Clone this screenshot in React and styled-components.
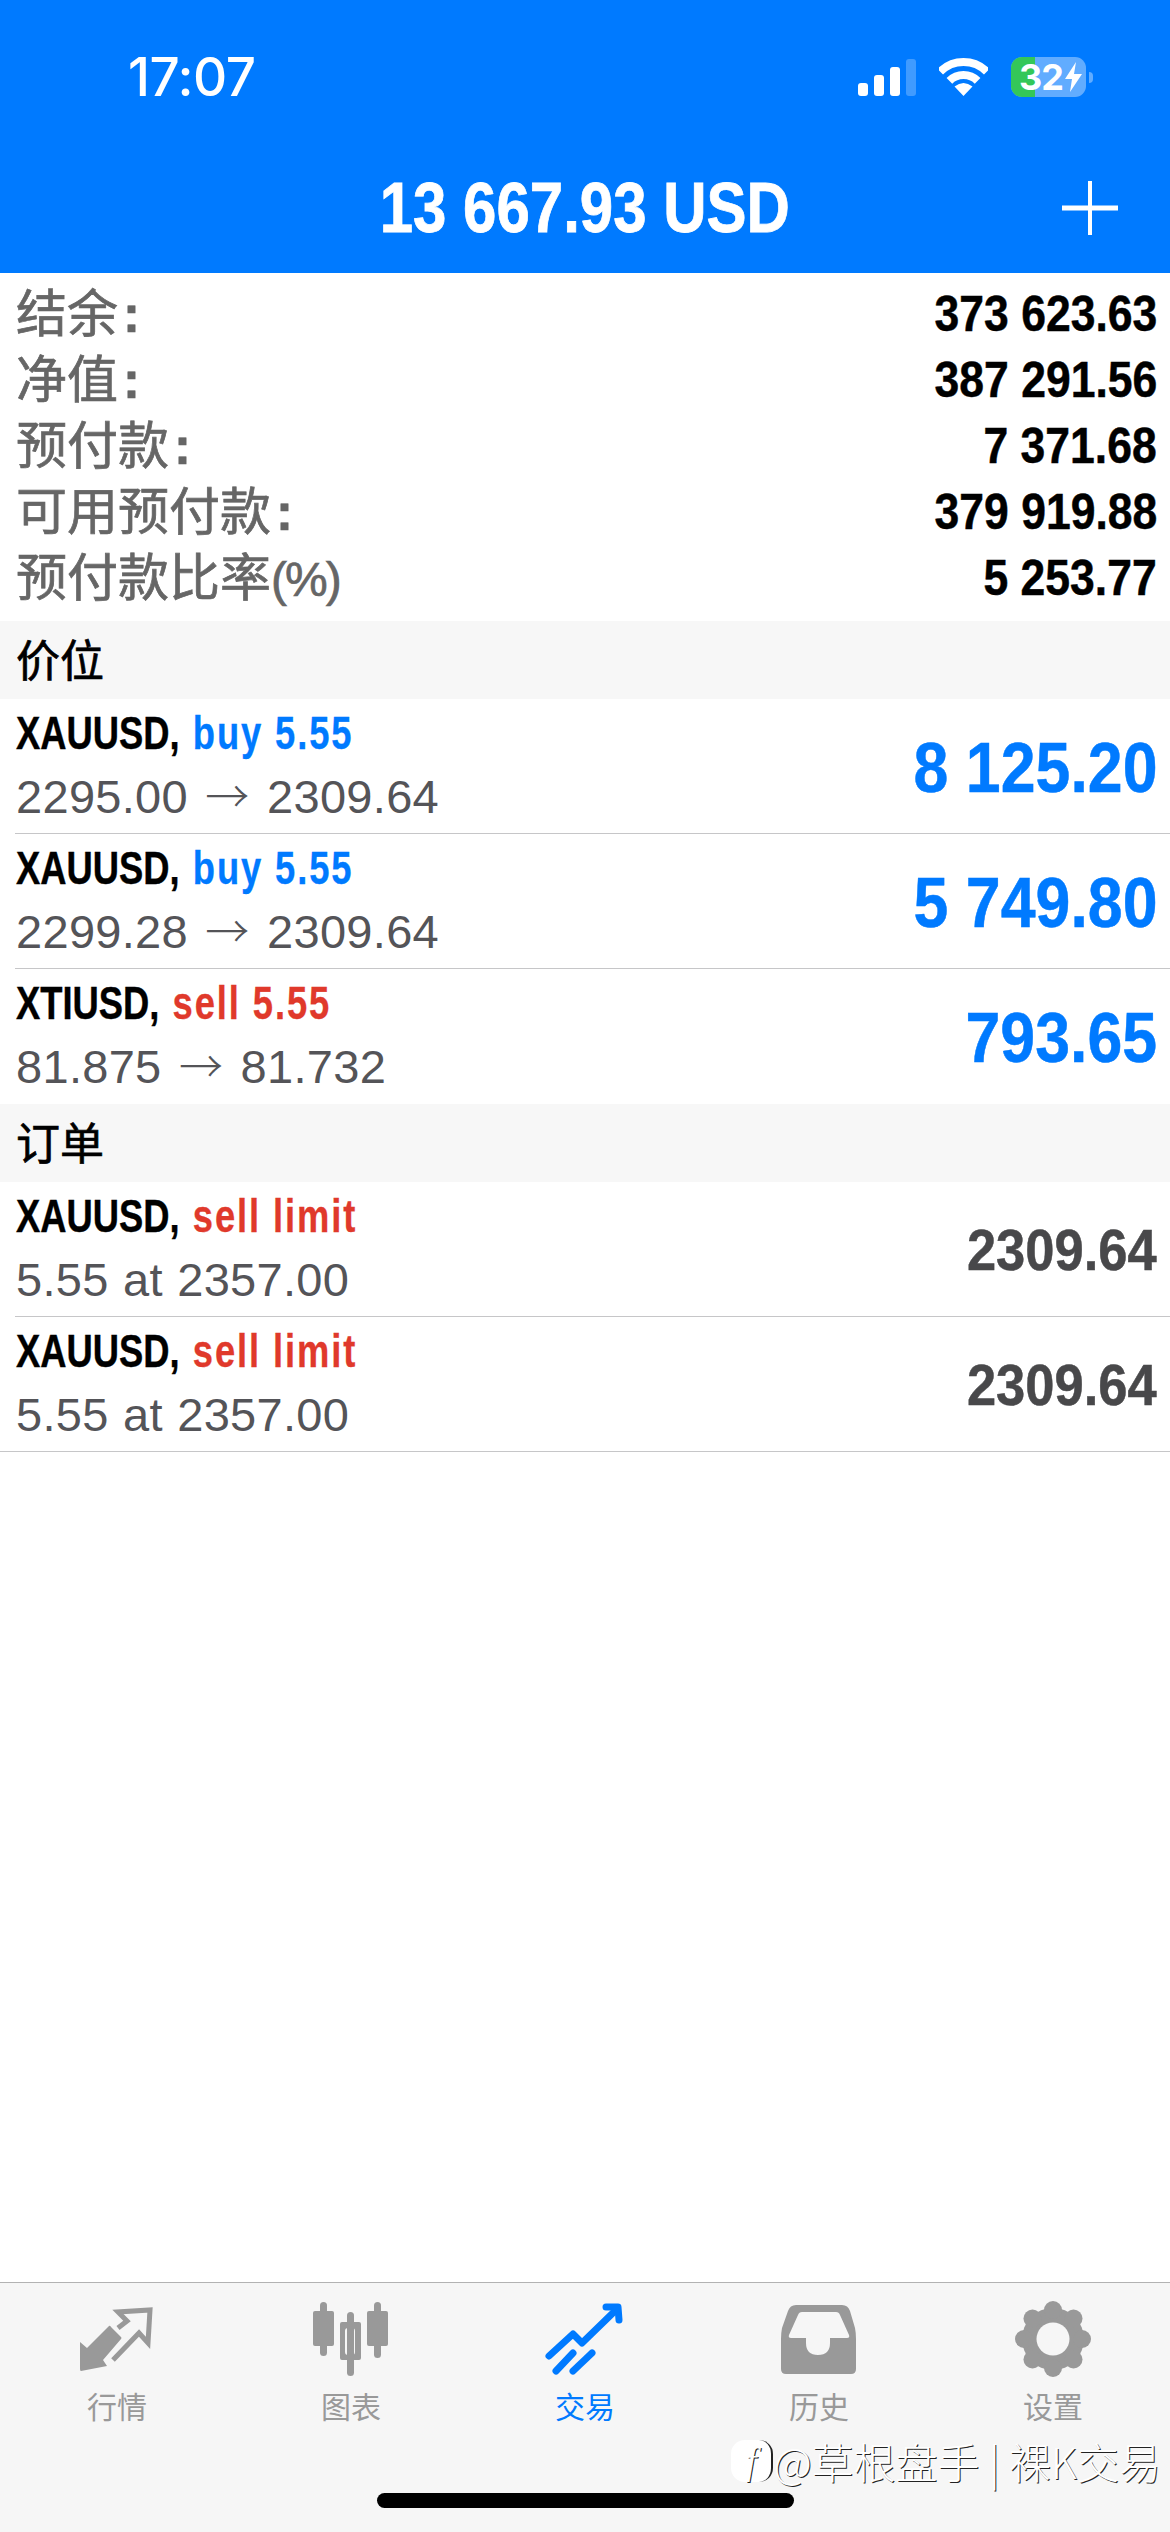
import React from 'react';
import styled, { createGlobalStyle } from 'styled-components';

const BLUE = '#007aff';
const RED = '#e0392b';
const TAB_GRAY = '#999999';
const FONT = `"Liberation Sans", "Noto Sans CJK SC", sans-serif`;

const GlobalStyle = createGlobalStyle`
    html, body {
        margin:0;
        padding:0;
        background:#fff;
    }
`

const Page = styled.div`
    position:relative;
    display:flex;
    flex-direction:column;
    width:1170px;
    height:2532px;
    overflow:hidden;
    background:#fff;
    font-family:${FONT};
`

const Narrow = styled.span`
    display:inline-block;
    white-space:pre;
    transform:scaleX(${props => props.$x});
    transform-origin:${props => props.$origin || 'left'} center;
`

const Header = styled.header`
    height:273px;
    background:${BLUE};
    color:#fff;
    flex-shrink:0;
`

const StatusBar = styled.div`
    display:flex;
    justify-content:space-between;
    align-items:center;
    height:154px;
    padding:0 77px 0 128px;
`

const Clock = styled.div`
    font-family:Inter, sans-serif;
    font-size:53px;
    font-weight:500;
    letter-spacing:-0.5px;
`

const StatusIcons = styled.div`
    display:flex;
    align-items:center;
    gap:23px;
`

const SignalBars = styled.div`
    display:flex;
    align-items:flex-end;
    gap:6px;
    height:37px;
`

const SignalBar = styled.div`
    width:10px;
    height:${props => props.$h}px;
    border-radius:3px;
    background:${props => props.$off ? 'rgba(255,255,255,0.25)' : '#fff'};
`

const Battery = styled.div`
    position:relative;
    display:flex;
    align-items:center;
    width:75px;
    height:40px;
    margin-right:7px;
    border-radius:11px;
    background:rgba(255,255,255,0.38);

    &::after {
        content:'';
        position:absolute;
        right:-7px;
        top:15px;
        width:4px;
        height:11px;
        border-radius:0 4px 4px 0;
        background:rgba(255,255,255,0.38);
    }
`

const BatteryFill = styled.div`
    position:absolute;
    left:0;
    top:0;
    bottom:0;
    width:24px;
    border-radius:11px 0 0 11px;
    background:#34c759;
`

const BatteryText = styled.span`
    position:relative;
    padding-left:8px;
    font-family:Inter, sans-serif;
    font-size:36px;
    font-weight:700;
    line-height:40px;
    letter-spacing:-1px;
`

const BatteryBolt = styled.svg`
    position:relative;
    margin-left:2px;
`

const NavBar = styled.div`
    display:grid;
    grid-template-columns:1fr auto 1fr;
    align-items:center;
    height:108px;
`

const Balance = styled(Narrow)`
    font-size:71px;
    font-weight:700;
    line-height:108px;
    -webkit-text-stroke:0.8px #fff;
`

const PlusBtn = styled.svg`
    justify-self:end;
    margin-right:52px;
`

const Summary = styled.section`
    padding:8px 13px 10px 16px;
`

const SummaryRow = styled.div`
    display:flex;
    justify-content:space-between;
    align-items:center;
    height:66px;
`

const SummaryLabel = styled.span`
    padding-bottom:8px;
    font-size:51px;
    color:#666;
    -webkit-text-stroke:0.7px #666;
`

const LabelColon = styled.span`
    margin-left:5px;
    font-weight:700;
`

const LabelUnit = styled.span`
    font-size:48px;
    letter-spacing:-2px;
`

const SummaryValue = styled(Narrow)`
    font-size:50px;
    font-weight:700;
    color:#000;
    -webkit-text-stroke:0.5px #000;
`

const SectionBand = styled.div`
    display:flex;
    align-items:center;
    box-sizing:border-box;
    height:78px;
    padding:0 0 5px 16px;
    background:#f7f7f7;
    font-size:44px;
    color:#000;
    -webkit-text-stroke:0.7px #000;
`

const TradeRow = styled.div`
    display:flex;
    justify-content:space-between;
    align-items:center;
    box-sizing:border-box;
    height:135px;
    margin-left:${props => props.$sep === 'inset' ? '15px' : '0'};
    padding:0 13px 0 ${props => props.$sep === 'inset' ? '1px' : '16px'};
    border-bottom:1px solid ${props => props.$sep === 'none' ? 'transparent' : '#c6c6c8'};
`

const TradeInfo = styled.div`
    display:flex;
    flex-direction:column;
    padding-bottom:2px;
`

const TradeTitle = styled(Narrow)`
    font-size:46px;
    font-weight:700;
    line-height:63px;
    color:#000;
    -webkit-text-stroke:0.4px #000;
`

const TradeSide = styled.span`
    margin-left:4px;
    letter-spacing:2.4px;
    color:${props => props.$buy ? BLUE : RED};
    -webkit-text-stroke:0.3px ${props => props.$buy ? BLUE : RED};
`

const TradeDetail = styled.div`
    font-size:47px;
    line-height:63px;
    letter-spacing:0.3px;
    word-spacing:1px;
    color:#545458;
    white-space:pre;
`

const DetailArrow = styled.span`
    display:inline-block;
    margin:0 3px;
    font-family:"Noto Sans CJK SC", sans-serif;
    font-size:44px;
    font-weight:300;
    line-height:40px;
`

const TradeAmount = styled(Narrow)`
    padding-top:${props => props.$order ? 0 : 4}px;
    font-size:${props => props.$order ? 58 : 70}px;
    font-weight:700;
    color:${props => props.$order ? '#48484a' : BLUE};
    -webkit-text-stroke:0.5px ${props => props.$order ? '#48484a' : BLUE};
`

const Spacer = styled.div`
    flex:1;
`

const TabBar = styled.nav`
    display:grid;
    grid-template-columns:repeat(5, 1fr);
    box-sizing:border-box;
    height:250px;
    padding-top:12px;
    border-top:1px solid #b2b2b2;
    background:#f6f6f6;
`

const Tab = styled.div`
    display:flex;
    flex-direction:column;
    align-items:center;
    color:${props => props.$active ? BLUE : TAB_GRAY};
`

const TabLabel = styled.span`
    font-size:30px;
    line-height:46px;
`

const HomeIndicator = styled.div`
    position:absolute;
    left:377px;
    bottom:24px;
    width:417px;
    height:15px;
    border-radius:8px;
    background:#000;
`

const Watermark = styled.div`
    position:absolute;
    right:9px;
    bottom:47px;
    display:flex;
    align-items:center;
    font-family:"Noto Sans CJK SC", sans-serif;
    font-size:42px;
    font-weight:300;
    line-height:48px;
    color:#fff;
    text-shadow:1px 1px 0 #222;
    white-space:pre;
`

const WatermarkLogo = styled.div`
    display:flex;
    justify-content:center;
    align-items:center;
    width:42px;
    height:42px;
    border-radius:14px;
    background:#fff;
    border-right:2px solid #222;
    box-sizing:border-box;
    font-family:"Liberation Serif", serif;
    font-style:italic;
    font-size:38px;
    color:#fff;
`

const IconSvg = ({ children }) => (
    <svg width="100" height="90" viewBox="0 0 100 90" fill="currentColor">{children}</svg>
);

const QuotesIcon = () => (
    <IconSvg>
        <g transform="translate(3 0)">
            <path d="M39 31 Q40 30 41 32 L51 42 Q52 43 51 44 L33 65 L37 71 L11 76 Q10 76 10 74 V47 L17 53 Z" />
            <path d="M48 33 L57 26 L48 17 L80 15 L78 48 L69 38 L43 65" fill="none" stroke="currentColor" strokeWidth="5" />
        </g>
    </IconSvg>
);

const ChartIcon = () => (
    <IconSvg>
        <g transform="translate(-1 0)">
            <rect x="20" y="7" width="7" height="54" rx="3.5" />
            <rect x="13" y="16" width="21" height="35" rx="2" />
            <rect x="74" y="7" width="7" height="56" rx="3.5" />
            <rect x="67" y="16" width="21" height="35" rx="2" />
            <rect x="47" y="17" width="7" height="64" rx="3.5" />
            <path fillRule="evenodd" d="M42 27 H59 Q61 27 61 29 V63 Q61 65 59 65 H42 Q40 65 40 63 V29 Q40 27 42 27 Z M48 33 Q45 33 45 36 V57 Q45 60 48 60 H52 Q55 60 55 57 V36 Q55 33 52 33 Z" />
        </g>
    </IconSvg>
);

const TradeIcon = () => (
    <IconSvg>
        <g fill="none" stroke="currentColor" strokeWidth="7" strokeLinecap="round" strokeLinejoin="round">
            <path d="M14 61 L38 39 L47 48 L82 14" />
            <path d="M71 12 H83 L84 25" />
            <path d="M21 76 L38 58" />
            <path d="M38 76 L57 58" />
        </g>
    </IconSvg>
);

const HistoryIcon = () => (
    <IconSvg>
        <g transform="translate(1 0)">
            <path fillRule="evenodd" d="M26 10 H72 Q78 10 80 16 L85 33 Q86 38 86 44 V74 Q86 79 81 79 H16 Q11 79 11 74 V44 Q11 38 12 33 L18 16 Q20 10 26 10 Z M32 17 Q29 17 28 20 L19 40 Q18 43 21 43 H36 V48 Q36 60 48 60 Q60 60 60 48 V43 H77 Q80 43 79 40 L70 20 Q69 17 66 17 Z" />
        </g>
    </IconSvg>
);

const gearLobes = [0, 45, 90, 135, 180, 225, 270, 315];

const SettingsIcon = () => (
    <IconSvg>
        <circle cx="50" cy="44" r="31" />
        {gearLobes.map(deg => (
            <circle
                key={deg}
                cx={50 + 29 * Math.cos(deg * Math.PI / 180)}
                cy={44 + 29 * Math.sin(deg * Math.PI / 180)}
                r="9"
            />
        ))}
        <circle cx="50" cy="44" r="16.5" fill="#f6f6f6" />
    </IconSvg>
);

const summary = [
    ['结余', '373 623.63'],
    ['净值', '387 291.56'],
    ['预付款', '7 371.68'],
    ['可用预付款', '379 919.88'],
    ['预付款比率', '5 253.77', '(%)'],
];

const positions = [
    { symbol: 'XAUUSD,', side: 'buy 5.55', buy: true, from: '2295.00', to: '2309.64', amount: '8 125.20', sep: 'inset' },
    { symbol: 'XAUUSD,', side: 'buy 5.55', buy: true, from: '2299.28', to: '2309.64', amount: '5 749.80', sep: 'inset' },
    { symbol: 'XTIUSD,', side: 'sell 5.55', buy: false, from: '81.875', to: '81.732', amount: '793.65', sep: 'none' },
];

const orders = [
    { symbol: 'XAUUSD,', side: 'sell limit', buy: false, detail: '5.55 at 2357.00', amount: '2309.64', sep: 'inset' },
    { symbol: 'XAUUSD,', side: 'sell limit', buy: false, detail: '5.55 at 2357.00', amount: '2309.64', sep: 'full' },
];

const tabs = [
    { label: '行情', Icon: QuotesIcon },
    { label: '图表', Icon: ChartIcon },
    { label: '交易', Icon: TradeIcon, active: true },
    { label: '历史', Icon: HistoryIcon },
    { label: '设置', Icon: SettingsIcon },
];

function Trade({ item, order }) {
    return (
        <TradeRow $sep={item.sep}>
            <TradeInfo>
                <TradeTitle $x={0.79}>
                    {item.symbol} <TradeSide $buy={item.buy}>{item.side}</TradeSide>
                </TradeTitle>
                <TradeDetail>
                    {item.detail || <>{item.from} <DetailArrow>→</DetailArrow> {item.to}</>}
                </TradeDetail>
            </TradeInfo>
            <TradeAmount $x={order ? 0.905 : 0.895} $origin="right" $order={order}>{item.amount}</TradeAmount>
        </TradeRow>
    );
}

function App() {
    return (
        <Page>
            <GlobalStyle />
            <Header>
                <StatusBar>
                    <Clock>17:07</Clock>
                    <StatusIcons>
                        <SignalBars>
                            <SignalBar $h={13} />
                            <SignalBar $h={21} />
                            <SignalBar $h={29} />
                            <SignalBar $h={37} $off />
                        </SignalBars>
                        <svg width="49" height="38" viewBox="0 0 49 38">
                            <g fill="none" stroke="#fff" strokeWidth="8">
                                <path d="M1.2 13.7 A33 33 0 0 1 47.8 13.7" />
                                <path d="M10.4 22.9 A20 20 0 0 1 38.6 22.9" />
                            </g>
                            <path d="M24.5 38 L15.5 28.5 Q24.5 21.5 33.5 28.5 Z" fill="#fff" />
                        </svg>
                        <Battery>
                            <BatteryFill />
                            <BatteryText>32</BatteryText>
                            <BatteryBolt width="17" height="30" viewBox="0 0 17 30">
                                <path d="M11 0 L0 17 H7 L5 30 L17 12 H9 Z" fill="#fff" />
                            </BatteryBolt>
                        </Battery>
                    </StatusIcons>
                </StatusBar>
                <NavBar>
                    <span />
                    <Balance $x={0.845} $origin="center">13 667.93 USD</Balance>
                    <PlusBtn width="56" height="54" viewBox="0 0 56 54">
                        <path d="M28 0 V54" stroke="#fff" strokeWidth="4" />
                        <path d="M0 27 H56" stroke="#fff" strokeWidth="5" />
                    </PlusBtn>
                </NavBar>
            </Header>
            <Summary>
                {summary.map(([label, value, unit]) => (
                    <SummaryRow key={label}>
                        <SummaryLabel>
                            {label}
                            {unit ? <LabelUnit>{unit}</LabelUnit> : <LabelColon>:</LabelColon>}
                        </SummaryLabel>
                        <SummaryValue $x={0.89} $origin="right">{value}</SummaryValue>
                    </SummaryRow>
                ))}
            </Summary>
            <SectionBand>价位</SectionBand>
            {positions.map(item => <Trade key={item.from} item={item} />)}
            <SectionBand>订单</SectionBand>
            {orders.map((item, i) => <Trade key={i} item={item} order />)}
            <Spacer />
            <TabBar>
                {tabs.map(({ label, Icon, active }) => (
                    <Tab key={label} $active={active}>
                        <Icon />
                        <TabLabel>{label}</TabLabel>
                    </Tab>
                ))}
            </TabBar>
            <HomeIndicator />
            <Watermark>
                <WatermarkLogo>f</WatermarkLogo>
                @草根盘手 | 裸K交易
            </Watermark>
        </Page>
    );
}

export default App;
